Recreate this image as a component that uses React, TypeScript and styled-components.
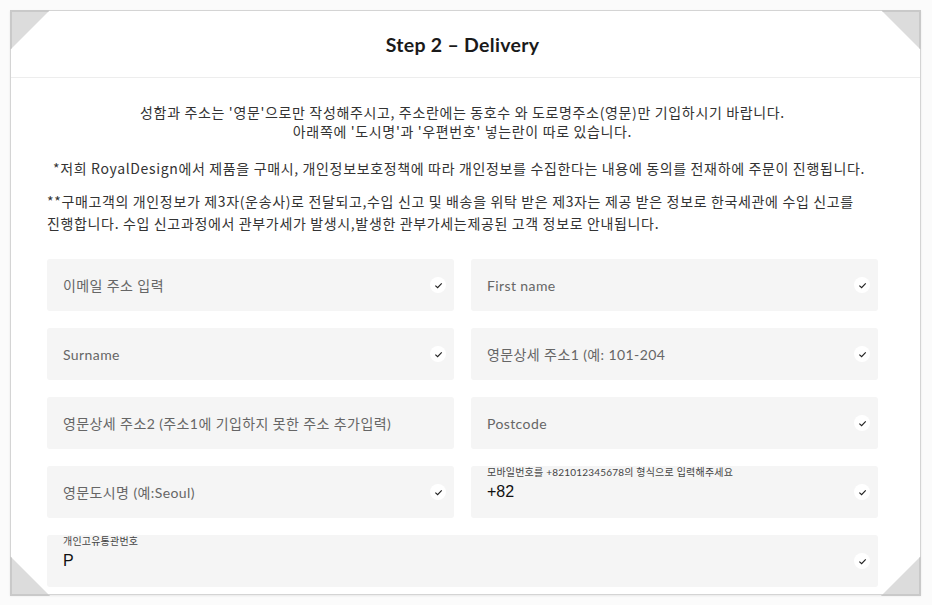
import React from "react";
import styled, { createGlobalStyle } from "styled-components";

const GlobalStyle = createGlobalStyle`
  html, body {
    margin: 0;
    padding: 0;
    background: #fbfbfb;
  }
  body {
    font-family: Lato, "Noto Sans CJK KR", sans-serif;
    color: #333;
  }
`;

const Frame = styled.div`
  position: relative;
  width: 932px;
  height: 605px;
  padding: 10px 11px 10px 10px;
  box-sizing: border-box;
`;

const Card = styled.div`
  height: 585px;
  box-sizing: border-box;
  background: #fff;
  border: 1px solid #d4d4d4;
  box-shadow: 0 1px 2px rgba(0, 0, 0, 0.08);
  overflow: hidden;
  display: flex;
  flex-direction: column;
`;

const Header = styled.div`
  height: 66px;
  flex-shrink: 0;
  display: flex;
  align-items: center;
  justify-content: center;
  padding-right: 6px;
  border-bottom: 1px solid #ededed;
`;

const Title = styled.h2`
  margin: 0;
  font-size: 19.5px;
  font-weight: 700;
  color: #1a1a1a;
  letter-spacing: 0.3px;
`;

const Body = styled.div`
  padding: 25px 42px 0 36px;
  display: flex;
  flex-direction: column;
`;

const Notice = styled.p<{ $center?: boolean; $indent?: number; $lh?: number; $mb?: number }>`
  margin: 0 0 ${(p) => p.$mb ?? 14}px;
  font-size: 14px;
  line-height: ${(p) => p.$lh || 20}px;
  letter-spacing: 0.65px;
  word-break: keep-all;
  color: #333;
  text-align: ${(p) => (p.$center ? "center" : "left")};
  padding-left: ${(p) => p.$indent || 0}px;
  font-family: "Noto Sans CJK KR", Lato, sans-serif;
`;

const Fields = styled.div`
  display: grid;
  grid-template-columns: 1fr 1fr;
  gap: 17px 17px;
  margin-top: 11px;
`;

const Field = styled.div<{ $full?: boolean }>`
  grid-column: ${(p) => (p.$full ? "1 / span 2" : "auto")};
  position: relative;
  height: 52px;
  background: #f5f5f5;
  border-radius: 3px;
  display: flex;
  align-items: center;
  padding: 0 8px 0 16px;
`;

const Placeholder = styled.span`
  flex: 1;
  font-size: 14px;
  letter-spacing: 0.4px;
  color: #666;
  font-family: Lato, "Noto Sans CJK KR", sans-serif;
`;

const Filled = styled.div`
  flex: 1;
  display: flex;
  flex-direction: column;
  align-self: stretch;
`;

const SmallLabel = styled.span`
  font-size: 10px;
  line-height: 12px;
  letter-spacing: 0.2px;
  color: #444;
  font-family: Lato, "Noto Sans CJK KR", sans-serif;
`;

const Value = styled.span`
  font-size: 16px;
  line-height: 20px;
  margin-top: 4px;
  color: #111;
  font-family: "Liberation Sans", Arial, sans-serif;
`;

const CheckBadge = styled.span`
  width: 16px;
  height: 16px;
  border-radius: 50%;
  background: #fff;
  display: flex;
  align-items: center;
  justify-content: center;
  flex-shrink: 0;
`;

const Corner = styled.div<{ $pos: "tl" | "tr" | "bl" | "br" }>`
  position: absolute;
  width: 40px;
  height: 40px;
  background: #dcdcdc;
  ${(p) =>
    p.$pos === "tl"
      ? "top: 10px; left: 10px; clip-path: polygon(0 0, 100% 0, 0 100%); border-top: 2px solid #c9c9c9; border-left: 2px solid #c9c9c9;"
      : p.$pos === "tr"
      ? "top: 10px; right: 11px; clip-path: polygon(0 0, 100% 0, 100% 100%); border-top: 2px solid #c9c9c9; border-right: 2px solid #c9c9c9;"
      : p.$pos === "bl"
      ? "bottom: 9px; left: 10px; clip-path: polygon(0 0, 100% 100%, 0 100%); border-bottom: 2px solid #c9c9c9; border-left: 2px solid #c9c9c9;"
      : "bottom: 9px; right: 11px; clip-path: polygon(100% 0, 100% 100%, 0 100%); border-bottom: 2px solid #c9c9c9; border-right: 2px solid #c9c9c9;"}
  box-sizing: border-box;
`;

const Check = () => (
  <CheckBadge>
    <svg width="9" height="9" viewBox="0 0 10 10">
      <path d="M1.5 5.2 L4 7.5 L8.6 2.6" fill="none" stroke="#222" strokeWidth="1.3" />
    </svg>
  </CheckBadge>
);

type FieldDef = {
  placeholder?: string;
  label?: string;
  value?: string;
  check?: boolean;
  full?: boolean;
};

const fields: FieldDef[] = [
  { placeholder: "이메일 주소 입력", check: true },
  { placeholder: "First name", check: true },
  { placeholder: "Surname", check: true },
  { placeholder: "영문상세 주소1 (예: 101-204", check: true },
  { placeholder: "영문상세 주소2 (주소1에 기입하지 못한 주소 추가입력)" },
  { placeholder: "Postcode", check: true },
  { placeholder: "영문도시명 (예:Seoul)", check: true },
  { label: "모바일번호를 +821012345678의 형식으로 입력해주세요", value: "+82", check: true },
  { label: "개인고유통관번호", value: "P", check: true, full: true },
];

export default function App() {
  return (
    <>
      <GlobalStyle />
      <Frame>
        <Card>
          <Header>
            <Title>Step 2 – Delivery</Title>
          </Header>
          <Body>
            <Notice $center $lh={19} $mb={17}>
              성함과 주소는 '영문'으로만 작성해주시고, 주소란에는 동호수 와 도로명주소(영문)만 기입하시기 바랍니다.
              <br />
              아래쪽에 '도시명'과 '우편번호' 넣는란이 따로 있습니다.
            </Notice>
            <Notice $indent={6} $mb={12}>
              *저희 RoyalDesign에서 제품을 구매시, 개인정보보호정책에 따라 개인정보를 수집한다는 내용에 동의를 전재하에 주문이 진행됩니다.
            </Notice>
            <Notice $lh={22}>
              **구매고객의 개인정보가 제3자(운송사)로 전달되고,수입 신고 및 배송을 위탁 받은 제3자는 제공 받은 정보로 한국세관에 수입 신고를
              진행합니다. 수입 신고과정에서 관부가세가 발생시,발생한 관부가세는제공된 고객 정보로 안내됩니다.
            </Notice>
            <Fields>
              {fields.map((f, i) => (
                <Field key={i} $full={f.full}>
                  {f.label ? (
                    <Filled>
                      <SmallLabel>{f.label}</SmallLabel>
                      <Value>{f.value}</Value>
                    </Filled>
                  ) : (
                    <Placeholder>{f.placeholder}</Placeholder>
                  )}
                  {f.check && <Check />}
                </Field>
              ))}
            </Fields>
          </Body>
        </Card>
        <Corner $pos="tl" />
        <Corner $pos="tr" />
        <Corner $pos="bl" />
        <Corner $pos="br" />
      </Frame>
    </>
  );
}
